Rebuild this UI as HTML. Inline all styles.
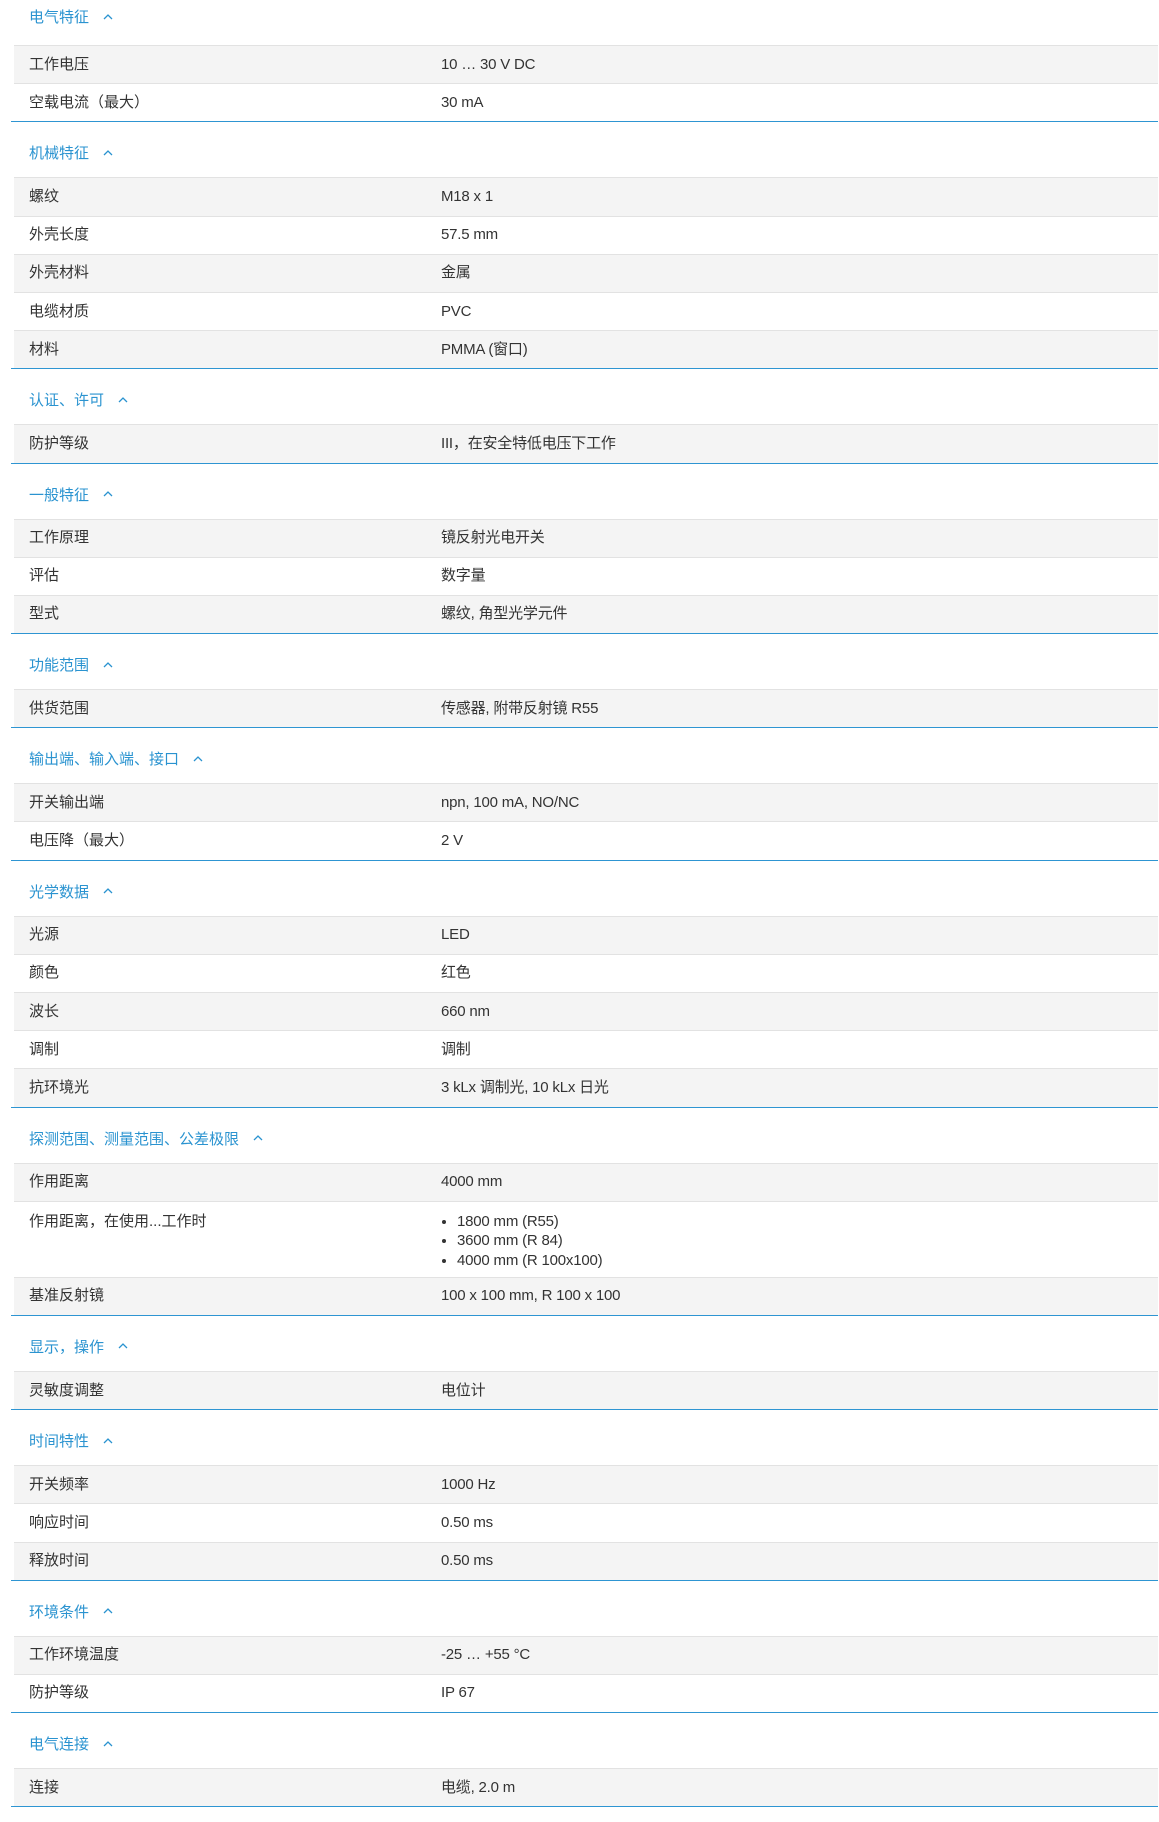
<!DOCTYPE html>
<html><head><meta charset="utf-8"><style>
body{margin:0;background:#fff;font-family:"Liberation Sans","Noto Sans CJK SC",sans-serif;font-size:15px;color:#333;}
.wrap{width:1147px;margin-left:11px;}
.h{height:55px;box-sizing:border-box;padding-top:22px;padding-left:18px;color:#2a93d0;font-size:15px;line-height:20px;}
.h.first{height:45px;padding-top:8px;}
.h svg{margin-left:14px;vertical-align:middle;position:relative;top:-2px}
.sec{border-bottom:1px solid #2e95d2;}
.r{display:flex;height:38.2px;box-sizing:border-box;border-top:1px solid #e2e2e2;align-items:center;margin-left:3px;line-height:20px;letter-spacing:-0.2px;}
.r div{height:20px;}
.r:nth-child(odd){background:#f4f4f4;}
.r .k{width:412px;padding-left:15px;letter-spacing:0}
.r .v{flex:1}
.r.m{height:76px;align-items:flex-start;padding-top:10px;}
.r.m div{height:auto}
ul{margin:0;padding-left:16px;line-height:19.5px}
</style></head><body><div class="wrap">
<div class="h first">电气特征<svg width="10" height="7" viewBox="0 0 10 7"><path d="M1 6L5 2L9 6" fill="none" stroke="#2a93d0" stroke-width="1.3"/></svg></div>
<div class="sec"><div class="r"><div class="k">工作电压</div><div class="v">10 … 30 V DC</div></div><div class="r"><div class="k">空载电流（最大）</div><div class="v">30 mA</div></div></div>

<div class="h">机械特征<svg width="10" height="7" viewBox="0 0 10 7"><path d="M1 6L5 2L9 6" fill="none" stroke="#2a93d0" stroke-width="1.3"/></svg></div>
<div class="sec"><div class="r"><div class="k">螺纹</div><div class="v">M18 x 1</div></div><div class="r"><div class="k">外壳长度</div><div class="v">57.5 mm</div></div><div class="r"><div class="k">外壳材料</div><div class="v">金属</div></div><div class="r"><div class="k">电缆材质</div><div class="v">PVC</div></div><div class="r"><div class="k">材料</div><div class="v">PMMA (窗口)</div></div></div>

<div class="h">认证、许可<svg width="10" height="7" viewBox="0 0 10 7"><path d="M1 6L5 2L9 6" fill="none" stroke="#2a93d0" stroke-width="1.3"/></svg></div>
<div class="sec"><div class="r"><div class="k">防护等级</div><div class="v">III，在安全特低电压下工作</div></div></div>

<div class="h">一般特征<svg width="10" height="7" viewBox="0 0 10 7"><path d="M1 6L5 2L9 6" fill="none" stroke="#2a93d0" stroke-width="1.3"/></svg></div>
<div class="sec"><div class="r"><div class="k">工作原理</div><div class="v">镜反射光电开关</div></div><div class="r"><div class="k">评估</div><div class="v">数字量</div></div><div class="r"><div class="k">型式</div><div class="v">螺纹, 角型光学元件</div></div></div>

<div class="h">功能范围<svg width="10" height="7" viewBox="0 0 10 7"><path d="M1 6L5 2L9 6" fill="none" stroke="#2a93d0" stroke-width="1.3"/></svg></div>
<div class="sec"><div class="r"><div class="k">供货范围</div><div class="v">传感器, 附带反射镜 R55</div></div></div>

<div class="h">输出端、输入端、接口<svg width="10" height="7" viewBox="0 0 10 7"><path d="M1 6L5 2L9 6" fill="none" stroke="#2a93d0" stroke-width="1.3"/></svg></div>
<div class="sec"><div class="r"><div class="k">开关输出端</div><div class="v">npn, 100 mA, NO/NC</div></div><div class="r"><div class="k">电压降（最大）</div><div class="v">2 V</div></div></div>

<div class="h">光学数据<svg width="10" height="7" viewBox="0 0 10 7"><path d="M1 6L5 2L9 6" fill="none" stroke="#2a93d0" stroke-width="1.3"/></svg></div>
<div class="sec"><div class="r"><div class="k">光源</div><div class="v">LED</div></div><div class="r"><div class="k">颜色</div><div class="v">红色</div></div><div class="r"><div class="k">波长</div><div class="v">660 nm</div></div><div class="r"><div class="k">调制</div><div class="v">调制</div></div><div class="r"><div class="k">抗环境光</div><div class="v">3 kLx 调制光, 10 kLx 日光</div></div></div>

<div class="h">探测范围、测量范围、公差极限<svg width="10" height="7" viewBox="0 0 10 7"><path d="M1 6L5 2L9 6" fill="none" stroke="#2a93d0" stroke-width="1.3"/></svg></div>
<div class="sec"><div class="r"><div class="k">作用距离</div><div class="v">4000 mm</div></div><div class="r m"><div class="k">作用距离，在使用...工作时</div><div class="v"><ul><li>1800 mm (R55)</li><li>3600 mm (R 84)</li><li>4000 mm (R 100x100)</li></ul></div></div><div class="r"><div class="k">基准反射镜</div><div class="v">100 x 100 mm, R 100 x 100</div></div></div>

<div class="h">显示，操作<svg width="10" height="7" viewBox="0 0 10 7"><path d="M1 6L5 2L9 6" fill="none" stroke="#2a93d0" stroke-width="1.3"/></svg></div>
<div class="sec"><div class="r"><div class="k">灵敏度调整</div><div class="v">电位计</div></div></div>

<div class="h">时间特性<svg width="10" height="7" viewBox="0 0 10 7"><path d="M1 6L5 2L9 6" fill="none" stroke="#2a93d0" stroke-width="1.3"/></svg></div>
<div class="sec"><div class="r"><div class="k">开关频率</div><div class="v">1000 Hz</div></div><div class="r"><div class="k">响应时间</div><div class="v">0.50 ms</div></div><div class="r"><div class="k">释放时间</div><div class="v">0.50 ms</div></div></div>

<div class="h">环境条件<svg width="10" height="7" viewBox="0 0 10 7"><path d="M1 6L5 2L9 6" fill="none" stroke="#2a93d0" stroke-width="1.3"/></svg></div>
<div class="sec"><div class="r"><div class="k">工作环境温度</div><div class="v">-25 … +55 °C</div></div><div class="r"><div class="k">防护等级</div><div class="v">IP 67</div></div></div>

<div class="h">电气连接<svg width="10" height="7" viewBox="0 0 10 7"><path d="M1 6L5 2L9 6" fill="none" stroke="#2a93d0" stroke-width="1.3"/></svg></div>
<div class="sec"><div class="r"><div class="k">连接</div><div class="v">电缆, 2.0 m</div></div></div>
</div></body></html>
